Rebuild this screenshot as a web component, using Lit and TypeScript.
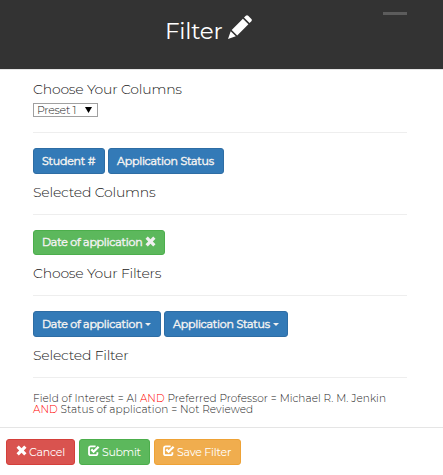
import { LitElement, html, css, svg } from "lit";
import { customElement } from "lit/decorators.js";

const removeIcon = html`<svg class="ico x" viewBox="0 0 11 11">${svg`<path d="M2.8 .5 5.5 3.2 8.2 .5 10.5 2.8 7.8 5.5 10.5 8.2 8.2 10.5 5.5 7.8 2.8 10.5 .5 8.2 3.2 5.5 .5 2.8Z" fill="currentColor"/>`}</svg>`;
const checkIcon = html`<svg class="ico" viewBox="0 0 12 12">${svg`<path d="M7.6 1.4H2.8Q1 1.4 1 3.2V8.4Q1 10.2 2.8 10.2H7.6Q9.4 10.2 9.4 8.4V7.2" fill="none" stroke="currentColor" stroke-width="1.8"/><path d="M3.3 4.4 5.6 6.7 10.6 1.7" fill="none" stroke="currentColor" stroke-width="2.3"/>`}</svg>`;
const pencilIcon = html`<svg class="pencil" viewBox="0 0 26 26">${svg`<path d="M18.8 1.8Q20 .6 21.2 1.8L24.4 5Q25.5 6.1 24.4 7.2L22.5 9.1 17 3.6ZM15.9 4.7 21.4 10.2 10.2 21.4 4.7 15.9ZM3.7 17.2 8.8 22.3 1 25Z" fill="#fff"/>`}</svg>`;

@customElement("app-root")
export class AppRoot extends LitElement {
  static styles = css`
    :host { display: block; height: 475px; overflow: hidden; background: #fff; color: #222;
      font-family: Montserrat, Inter, sans-serif; font-weight: 300; }
    * { box-sizing: border-box; }
    header { position: relative; height: 70px; background: #333; border-bottom: 1px solid #e5e5e5; color: #fff;
      display: flex; justify-content: center; padding: 15px 24px 0 0; }
    .title { font-size: 23px; line-height: 32px; width: 62px; font-weight: 400; white-space: nowrap; letter-spacing: -.2px; margin-left: -1px; }
    .pencil { width: 26px; height: 26px; margin-top: -1px; }
    .dash { position: absolute; left: 383px; top: 12px; width: 24px; height: 3px; background: #5c5c5c; }
    main { height: 357px; padding: 10px 36px 0 33px; }
    h4 { margin: 0; font-size: 14px; line-height: 18px; font-weight: 300; height: 18px; white-space: nowrap; letter-spacing: -.2px; }
    .select { margin-top: 5px; width: 65px; height: 14px; border: 1px solid #a0a0a0; display: flex; align-items: center;
      justify-content: space-between; padding: 0 5px 0 3px; font-size: 11px; line-height: 12px; letter-spacing: -.25px; }
    .select span:first-child { margin-top: -1px; }
    .arrow { width: 7px; height: 6px; background: #000; clip-path: polygon(0 0, 100% 0, 50% 100%); }
    hr { height: 1px; border: 0; background: #eee; margin: 13px 0 15px; }
    .select + hr { margin-top: 15px; }
    .row { display: flex; gap: 3px; margin-bottom: 9px; }
    .btn { height: 26px; border: 1px solid #2e6da4; border-radius: 3px; background: #337ab7; color: #f0f0f0;
      font-size: 11px; line-height: 24px; font-weight: 400; display: flex; align-items: center; padding: 0 0 1px 8px;
      white-space: nowrap; gap: 3px; letter-spacing: -.22px; }
    .row .btn { -webkit-text-stroke: .45px currentColor; }
    .green { background: #5cb85c; border-color: #4cae4c; }
    .red { background: #d9534f; border-color: #d43f3a; }
    .orange { background: #f0ad4e; border-color: #eea236; }
    .student { width: 72px; } .status { width: 116px; } .row .picked { width: 132px; height: 25px; }
    .datedrop { width: 128px; } .statdrop { width: 124px; }
    .caret { border: 3px solid transparent; border-top-color: currentColor; border-bottom: 0; margin-top: 2px; }
    .ico { width: 12px; height: 12px; flex: none; margin-top: -1px; }
    .x { width: 11px; height: 11px; }
    .query { font-size: 10.5px; line-height: 11px; white-space: nowrap; letter-spacing: .07px; }
    .and { color: #f00; }
    footer { height: 48px; border-top: 1px solid #e5e5e5; padding: 11px 0 0 6px; display: flex; gap: 4px; }
    footer .btn { color: #fff; gap: 2px; padding: 0 0 0 9px; }
    footer .submit, footer .save { padding-left: 8px; }
    footer .submit { letter-spacing: -.35px; }
    footer .ico { margin-top: -3px; }
    .cancel { width: 69px; } .submit { width: 71px; } .save { width: 87px; }
  `;
  render() {
    return html`
      <header><span class="title">Filter</span>${pencilIcon}<span class="dash"></span></header>
      <main>
        <h4>Choose Your Columns</h4>
        <div class="select"><span>Preset 1</span><span class="arrow"></span></div>
        <hr />
        <div class="row"><div class="btn student"><span>Student #</span></div><div class="btn status"><span>Application Status</span></div></div>
        <h4>Selected Columns</h4>
        <hr />
        <div class="row"><div class="btn green picked"><span>Date of application</span>${removeIcon}</div></div>
        <h4>Choose Your Filters</h4>
        <hr />
        <div class="row"><div class="btn datedrop"><span>Date of application</span><span class="caret"></span></div><div class="btn statdrop"><span>Application Status</span><span class="caret"></span></div></div>
        <h4>Selected Filter</h4>
        <hr />
        <div class="query">Field of Interest = AI <span class="and">AND</span> Preferred Professor = Michael R. M. Jenkin<br /><span class="and">AND</span> Status of application = Not Reviewed</div>
      </main>
      <footer>
        <div class="btn red cancel">${removeIcon}<span>Cancel</span></div>
        <div class="btn green submit">${checkIcon}<span>Submit</span></div>
        <div class="btn orange save">${checkIcon}<span>Save Filter</span></div>
      </footer>`;
  }
}
